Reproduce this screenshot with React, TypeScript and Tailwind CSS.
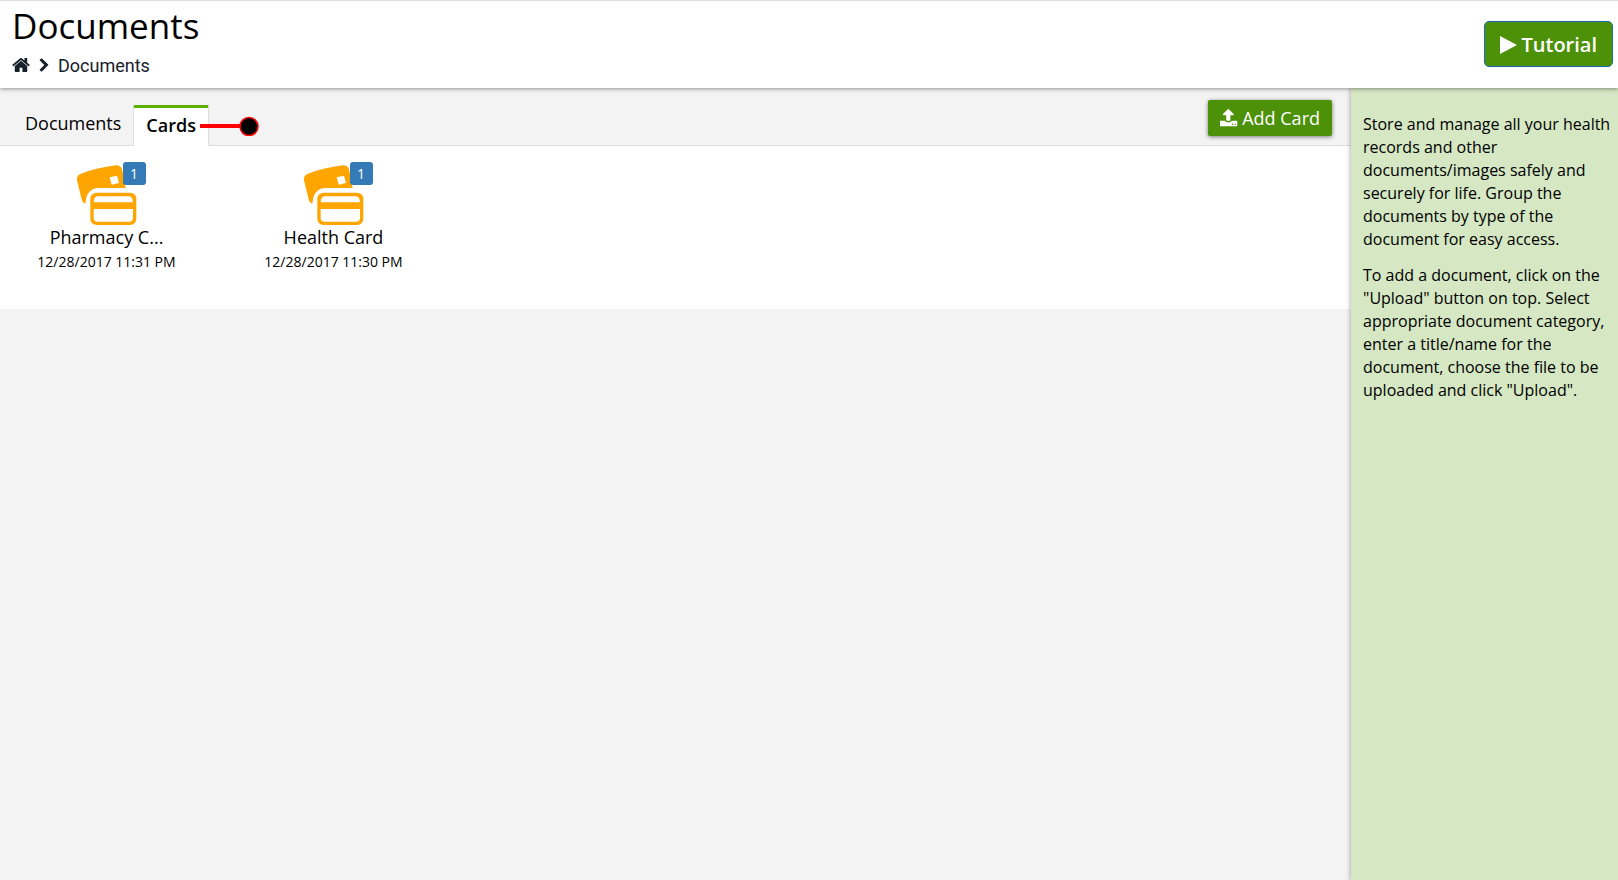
type CardItem = {
  id: number;
  title: string;
  date: string;
  count: number;
};

const cards: CardItem[] = [
  { id: 1, title: 'Pharmacy C...', date: '12/28/2017 11:31 PM', count: 1 },
  { id: 2, title: 'Health Card', date: '12/28/2017 11:30 PM', count: 1 },
];

const HomeIcon = () => (
  <svg viewBox="64 0 1664 1792" className="h-[20px] w-[18px] fill-current" aria-hidden="true">
    <path d="M1472 992v480q0 26-19 45t-45 19h-384v-384h-256v384h-384q-26 0-45-19t-19-45v-480q0-1 .5-3t.5-3l575-474 575 474q1 2 1 6zm223-69l-62 74q-8 9-21 11h-3q-13 0-21-7l-692-577-692 577q-12 8-24 7-13-2-21-11l-62-74q-8-10-7-23.500t11-21.500l719-599q32-26 76-26t76 26l244 204v-195q0-14 9-23t23-9h192q14 0 23 9t9 23v408l219 182q10 8 11 21.500t-7 23.500z" />
  </svg>
);

const ChevronIcon = () => (
  <svg viewBox="300 0 1130 1792" className="h-[15px] w-[10px] fill-current" aria-hidden="true">
    <path d="M1363 877l-742 742q-19 19-45 19t-45-19l-166-166q-19-19-19-45t19-45l531-531-531-531q-19-19-19-45t19-45l166-166q19-19 45-19t45 19l742 742q19 19 19 45t-19 45z" />
  </svg>
);

const UploadIcon = () => (
  <svg viewBox="64 64 1664 1664" className="h-[18px] w-[18px] fill-current" aria-hidden="true">
    <path d="M1280 1472q0-26-19-45t-45-19-45 19-19 45 19 45 45 19 45-19 19-45zm256 0q0-26-19-45t-45-19-45 19-19 45 19 45 45 19 45-19 19-45zm128-224v320q0 40-28 68t-68 28h-1472q-40 0-68-28t-28-68v-320q0-40 28-68t68-28h427q21 56 70.500 92t110.500 36h256q61 0 110.500-36t70.500-92h427q40 0 68 28t28 68zm-325-648q-17 40-59 40h-256v448q0 26-19 45t-45 19h-256q-26 0-45-19t-19-45v-448h-256q-42 0-59-40-17-39 14-69l448-448q18-19 45-19t45 19l448 448q31 30 14 69z" />
  </svg>
);

const CardsIcon = () => (
  <svg viewBox="0 0 180 180" className="h-[60px] w-[60px]" aria-hidden="true">
    <path
      fill="#ffa500"
      fillRule="evenodd"
      d="M12 26Q60 8 116 1q13-2 19 11L146 69H62Q28 72 25 116Q17 114 14 103L0 46Q-2 31 12 26zM98 37l22-5 6 22-22 5z"
    />
    <path
      fill="#ffa500"
      fillRule="evenodd"
      d="M60 83h98q20 0 20 20v57q0 20-20 20H60q-20 0-20-20v-57q0-20 20-20zM62 94q-11 0-12 18H168q-1-18-12-18zM50 132V158q0 12 12 12h94q12 0 12-12V132z"
    />
  </svg>
);

const Header = () => (
  <header className="relative z-10 flex h-[88px] items-start justify-between border-t border-[#ddd] bg-white pr-[5px] pl-3 shadow-[0_1px_4px_rgba(0,0,0,0.4)]">
    <div>
      <h1 className="text-[35px] leading-[50px]">Documents</h1>
      <nav
        aria-label="Breadcrumb"
        className="flex h-[28px] items-center font-[Roboto,sans-serif] text-[18px] text-[#16212b]"
      >
        <a href="#" aria-label="Home">
          <HomeIcon />
        </a>
        <span className="mx-[9px]">
          <ChevronIcon />
        </span>
        <span>Documents</span>
      </nav>
    </div>
    <button
      type="button"
      className="mt-5 flex h-[46px] items-center gap-1 rounded-[5px] border border-[#1a6cb0] bg-[#4d9108] px-[15px] pt-px text-[20px] font-semibold text-white"
    >
      <svg viewBox="0 0 17 18" className="h-[18px] w-[17px] fill-current" aria-hidden="true">
        <path d="M0 0L17 9L0 18z" />
      </svg>
      Tutorial
    </button>
  </header>
);

const Tabs = () => (
  <div className="flex h-[58px] items-end justify-between border-b border-[#ddd] bg-[#f3f3f3] pr-[19px] pl-[13px]">
    <div role="tablist" className="-mb-px flex items-end text-[18px]">
      <button type="button" role="tab" aria-selected="false" className="h-[44px] px-3 pb-[2px]">
        Documents
      </button>
      <button
        type="button"
        role="tab"
        aria-selected="true"
        className="relative h-[41px] rounded-t-[2px] border-x border-t-[3px] border-x-[#ddd] border-t-[#5cb000] bg-white px-3 pb-[3px] font-semibold"
      >
        Cards
        <svg
          viewBox="0 0 60 20"
          className="absolute top-[8px] left-[66px] h-5 w-[60px]"
          aria-hidden="true"
        >
          <path d="M0 10H42" stroke="#f00" strokeWidth="4" />
          <circle cx="49" cy="10.500" r="9" fill="#000" stroke="#f00" strokeWidth="1.500" />
        </svg>
      </button>
    </div>
    <button
      type="button"
      className="mb-[9px] flex h-9 items-center gap-1 rounded-[2px] bg-[#4d9108] px-3 text-[18px] text-white shadow-[0_1px_4px_rgba(0,0,0,0.5)]"
    >
      <UploadIcon />
      Add Card
    </button>
  </div>
);

const CardTile = ({ card }: { card: CardItem }) => (
  <li className="w-[213px] text-center">
    <a href="#" className="flex flex-col items-center">
      <span className="relative">
        <CardsIcon />
        <span className="absolute -top-[3px] left-[46px] h-[23px] w-[23px] rounded-[3px] bg-[#337ab7] text-[14px] leading-[23px] text-white">
          {card.count}
        </span>
      </span>
      <span className="text-[18px] leading-[25px]">{card.title}</span>
      <span className="text-[14px] leading-[24px]">{card.date}</span>
    </a>
  </li>
);

const HelpPanel = () => (
  <aside className="z-[1] w-[267px] shrink-0 space-y-[13px] bg-[#d5e7c3] pt-[25px] pr-1 pl-[12px] text-[16px] leading-[23px] shadow-[0_0_5px_rgba(0,0,0,0.4)]">
    <p>
      Store and manage all your health records and other documents/images safely and securely for
      life. Group the documents by type of the document for easy access.
    </p>
    <p>
      To add a document, click on the "Upload" button on top. Select appropriate document category,
      enter a title/name for the document, choose the file to be uploaded and click "Upload".
    </p>
  </aside>
);

export default function App() {
  return (
    <div className="flex min-h-screen flex-col bg-[#f3f3f3] font-['Open_Sans',sans-serif] text-black">
      <Header />
      <div className="flex flex-1">
        <main className="min-w-0 flex-1">
          <Tabs />
          <ul className="flex flex-wrap gap-x-[14px] bg-white pt-[19px] pb-[35px]">
            {cards.map((card) => (
              <CardTile key={card.id} card={card} />
            ))}
          </ul>
        </main>
        <HelpPanel />
      </div>
    </div>
  );
}
